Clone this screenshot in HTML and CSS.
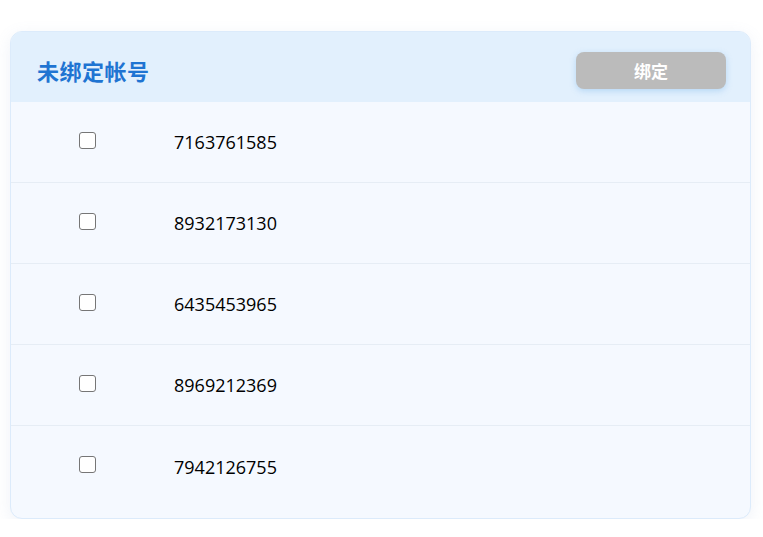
FILE: index.html
```html
<!DOCTYPE html>
<html lang="zh">
<head>
<meta charset="utf-8">
<link rel="stylesheet" href="styles.css">
</head>
<body>
<div class="card">
  <div class="card-header">
    <h2 class="title">未绑定帐号</h2>
    <button class="bind-btn" disabled>绑定</button>
  </div>
  <div class="rows">
    <div class="row"><div class="cell-check"><span class="checkbox"></span></div><div class="cell-id">7163761585</div></div>
    <div class="row"><div class="cell-check"><span class="checkbox"></span></div><div class="cell-id">8932173130</div></div>
    <div class="row"><div class="cell-check"><span class="checkbox"></span></div><div class="cell-id">6435453965</div></div>
    <div class="row"><div class="cell-check"><span class="checkbox"></span></div><div class="cell-id">8969212369</div></div>
    <div class="row"><div class="cell-check"><span class="checkbox"></span></div><div class="cell-id">7942126755</div></div>
  </div>
</div>
</body>
</html>
```

FILE: styles.css
```css
html, body {
  margin: 0;
  padding: 0;
  background: #ffffff;
}
body {
  padding: 31px 12px 0 10px;
  font-family: "Open Sans", "Noto Sans", "Noto Sans CJK SC", sans-serif;
}
.card {
  width: 739px;
  border: 1px solid #dcebfb;
  border-radius: 12px;
  background: #f5f9ff;
  box-shadow: 0 4px 16px rgba(120, 150, 200, 0.12);
  overflow: hidden;
  padding-bottom: 11px;
}
.card-header {
  box-sizing: border-box;
  height: 70px;
  background: #e2f0fd;
  display: flex;
  align-items: center;
  justify-content: space-between;
  padding: 7px 24px 0 26px;
}
.title {
  margin: 0;
  font-family: "Noto Sans CJK SC", sans-serif;
  font-size: 22px;
  line-height: 1.2;
  font-weight: 700;
  color: #1f74d2;
  letter-spacing: 0.5px;
}
.bind-btn {
  width: 150px;
  height: 37px;
  border: none;
  border-radius: 8px;
  background: #bbbbbb;
  color: #ffffff;
  font-family: "Noto Sans CJK SC", sans-serif;
  font-size: 17px;
  font-weight: 700;
  box-shadow: 0 2px 6px rgba(100, 170, 230, 0.35);
  padding: 0;
}
.row {
  height: 80px;
  display: flex;
  align-items: center;
  border-bottom: 1px solid #e6edf5;
}
.row:last-child {
  border-bottom: none;
  height: 81px;
}
.cell-check {
  width: 152px;
  display: flex;
  justify-content: center;
  padding-bottom: 4px;
}
.checkbox {
  box-sizing: border-box;
  width: 17px;
  height: 17px;
  border: 1.5px solid #767676;
  border-radius: 3px;
  background: #ffffff;
}
.cell-id {
  padding-left: 11px;
  font-size: 18px;
  color: #000000;
  font-weight: 500;
}
```
